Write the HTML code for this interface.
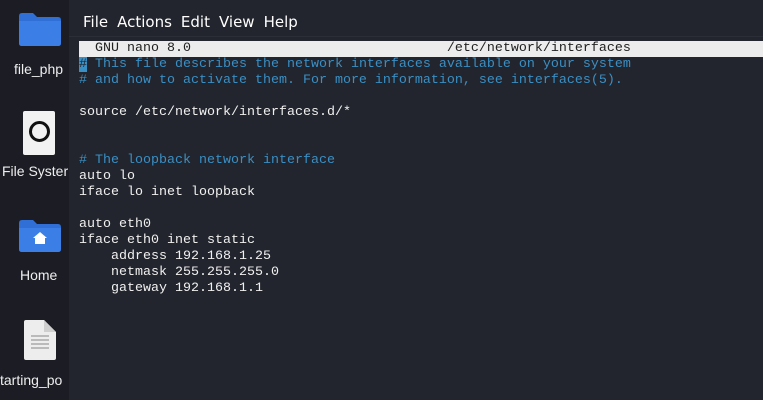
<!DOCTYPE html>
<html><head><style>
body{margin:0;width:763px;height:400px;overflow:hidden;background:#1b1c22;position:relative;font-family:"Liberation Sans",sans-serif}
.side{position:absolute;left:0;top:0;width:69px;height:400px;background:#1c1d24}
.lbl{position:absolute;color:#eee;font-size:14px;white-space:nowrap}
.term{position:absolute;left:69px;top:0;width:694px;height:400px;background:#22252d}
.menu{position:absolute;left:14px;top:13px;color:#fff;font-size:15px;font-family:"DejaVu Sans",sans-serif}
.menu span{margin-right:9px}
.sep{position:absolute;left:0;right:0;top:36px;height:1px;background:#2b2e37}
pre{position:absolute;left:10px;top:41px;margin:0;font-family:"Liberation Mono",monospace;font-size:13.33px;line-height:16px;color:#f0f0f0}
.hd{background:#ececec;color:#222;display:inline-block;width:684px}
.c{color:#3a8fc4}
.cur{background:#3a8fc4;color:#22252d}
</style></head><body>
<div class="side">
<svg style="position:absolute;left:19px;top:12px" width="42" height="34"><path d="M0 4 Q0 1 3 1 H14 L18 5 H39 Q42 5 42 8 V31 Q42 34 39 34 H3 Q0 34 0 31Z" fill="#2f6fd6"/><path d="M0 9 H42 V31 Q42 34 39 34 H3 Q0 34 0 31Z" fill="#3a7ee6"/></svg>
<div class="lbl" style="left:14px;top:61px">file_php</div>
<div style="position:absolute;left:23px;top:111px;width:32px;height:44px;background:#f2f2f2;border-radius:2px"></div>
<div style="position:absolute;left:29px;top:121px;width:15px;height:15px;border:3px solid #111;border-radius:50%"></div>
<div class="lbl" style="left:2px;top:163px">File Syster</div>
<svg style="position:absolute;left:19px;top:220px" width="42" height="32"><path d="M0 3 Q0 0 3 0 H14 L18 4 H39 Q42 4 42 7 V29 Q42 32 39 32 H3 Q0 32 0 29Z" fill="#2f6fd6"/><path d="M0 8 H42 V29 Q42 32 39 32 H3 Q0 32 0 29Z" fill="#3a7ee6"/><path d="M21 12 L28 18 H26 V24 H16 V18 H14Z" fill="#fff"/></svg>
<div class="lbl" style="left:20px;top:267px">Home</div>
<svg style="position:absolute;left:24px;top:320px" width="32" height="40"><path d="M0 2 Q0 0 2 0 H20 L32 12 V38 Q32 40 30 40 H2 Q0 40 0 38Z" fill="#ededed"/><path d="M20 0 V12 H32Z" fill="#cfcfcf"/><path d="M7 16H25M7 20H25M7 24H25M7 28H25" stroke="#aaa" stroke-width="1.5"/></svg>
<div class="lbl" style="left:0;top:372px">tarting_po</div>
</div>
<div class="term">
<div class="menu"><span>File</span><span>Actions</span><span>Edit</span><span>View</span><span>Help</span></div>
<div class="sep"></div>
<pre><span class="hd">  GNU nano 8.0                                /etc/network/interfaces</span>
<span class="cur">#</span><span class="c"> This file describes the network interfaces available on your system</span>
<span class="c"># and how to activate them. For more information, see interfaces(5).</span>

source /etc/network/interfaces.d/*


<span class="c"># The loopback network interface</span>
auto lo
iface lo inet loopback

auto eth0
iface eth0 inet static
    address 192.168.1.25
    netmask 255.255.255.0
    gateway 192.168.1.1</pre>
</div>
</body></html>
